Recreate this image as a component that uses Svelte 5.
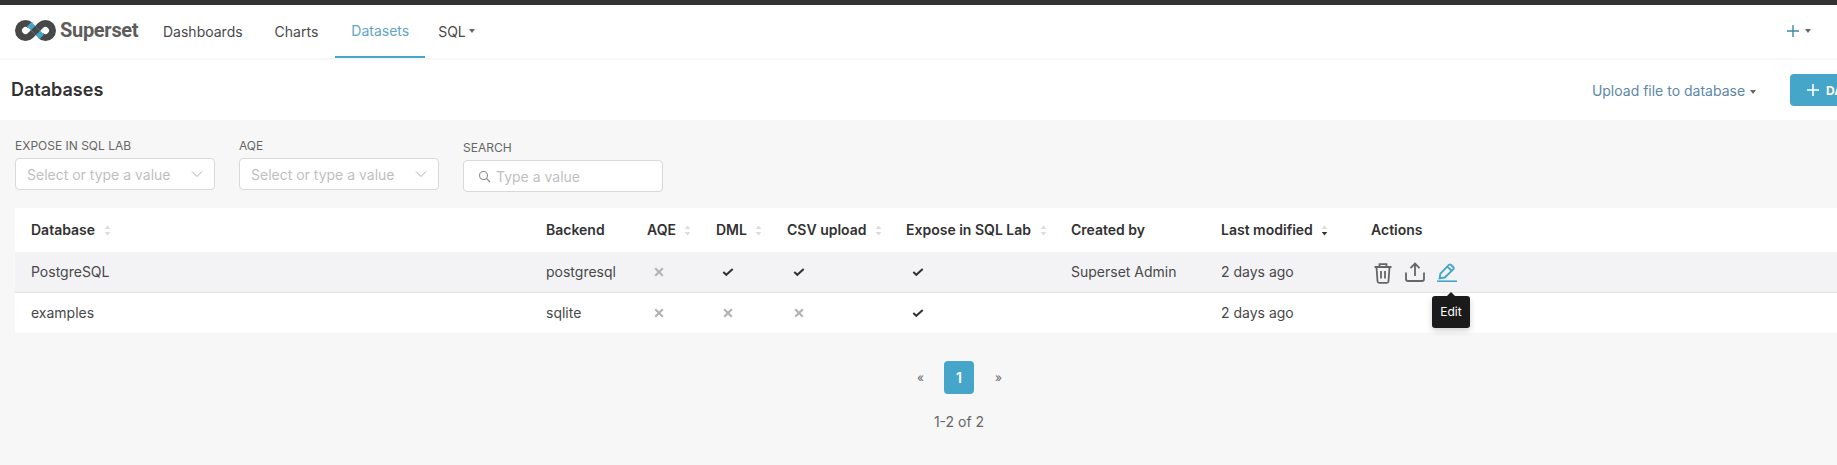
<script>
  const columns = [
    { label: 'Database', sort: true },
    { label: 'Backend' },
    { label: 'AQE', sort: true },
    { label: 'DML', sort: true },
    { label: 'CSV upload', sort: true },
    { label: 'Expose in SQL Lab', sort: true },
    { label: 'Created by' },
    { label: 'Last modified', sort: true, active: true },
    { label: 'Actions' }
  ];
  const rows = [
    { name: 'PostgreSQL', backend: 'postgresql', aqe: false, dml: true, csv: true, expose: true, by: 'Superset Admin', when: '2 days ago', actions: true },
    { name: 'examples', backend: 'sqlite', aqe: false, dml: false, csv: false, expose: true, by: '', when: '2 days ago', actions: false }
  ];
</script>

{#snippet flag(on)}
  {#if on}
    <svg class="flag" width="12" height="12" viewBox="0 0 12 12"><path d="M1.3 6 4.3 8.8 10.7 3" fill="none" stroke="#323232" stroke-width="2"/></svg>
  {:else}
    <svg class="flag" width="12" height="12" viewBox="0 0 12 12"><path d="M2.2 2.2 9.8 9.8M9.8 2.2 2.2 9.8" fill="none" stroke="#b2b2b2" stroke-width="2.1"/></svg>
  {/if}
{/snippet}

{#snippet chevron()}
  <svg class="chev" width="12" height="8" viewBox="0 0 12 8"><path d="M1 1.5 6 6.5 11 1.5" fill="none" stroke="#b2b2b2" stroke-width="1"/></svg>
{/snippet}

<div class="page">
  <header class="nav">
    <div class="brand">
      <svg width="41" height="21" viewBox="0 0 41 21">
        <path d="M15.45 5.55A7 7 0 1 0 15.45 15.45L25.55 5.55A7 7 0 1 1 25.55 15.45" fill="none" stroke="#484848" stroke-width="7"/>
        <path d="M14.2 4.3 26.8 16.7" fill="none" stroke="#45a6c9" stroke-width="6.4"/>
        <path d="M18.4 12.5 22.6 8.5" fill="none" stroke="#484848" stroke-width="7"/>
      </svg>
      <span class="word">Superset</span>
    </div>
    <nav class="menu">
      <a class="item">Dashboards</a>
      <a class="item">Charts</a>
      <a class="item active">Datasets</a>
      <a class="item sql">SQL <i class="caret"></i></a>
    </nav>
    <div class="plus">
      <svg width="14" height="14" viewBox="0 0 14 14"><path d="M7 1V13M1 7H13" stroke="#3f88a8" stroke-width="1.4" fill="none"/></svg>
      <i class="caret"></i>
    </div>
  </header>

  <section class="sub">
    <h1>Databases</h1>
    <div class="sub-actions">
      <span class="upload">Upload file to database <i class="caret"></i></span>
      <button class="primary">
        <svg width="14" height="14" viewBox="0 0 14 14"><path d="M7 1V13M1 7H13" stroke="#fff" stroke-width="1.6" fill="none"/></svg>
        DATABASE
      </button>
    </div>
  </section>

  <section class="filters">
    <div class="filter">
      <span class="label">EXPOSE IN SQL LAB</span>
      <div class="field"><span class="ph">Select or type a value</span>{@render chevron()}</div>
    </div>
    <div class="filter">
      <span class="label">AQE</span>
      <div class="field"><span class="ph">Select or type a value</span>{@render chevron()}</div>
    </div>
    <div class="filter search">
      <span class="label">SEARCH</span>
      <div class="field">
        <svg width="13" height="13" viewBox="0 0 13 13"><circle cx="5.5" cy="5.5" r="4" fill="none" stroke="#8a8a8a" stroke-width="1.1"/><path d="M8.5 8.5 12 12" stroke="#8a8a8a" stroke-width="1.1"/></svg>
        <span class="ph">Type a value</span>
      </div>
    </div>
  </section>

  <table>
    <colgroup>
      <col class="c0" /><col class="c1" /><col class="c2" /><col class="c3" /><col class="c4" /><col class="c5" /><col class="c6" /><col class="c7" /><col />
    </colgroup>
    <thead>
      <tr>
        {#each columns as col}
          <th>
            {col.label}
            {#if col.sort}
              <svg class="sort" width="7" height="11" viewBox="0 0 7 11">
                <path d="M3.5 0.5 6.3 4H.7Z" fill="#dcdcdc"/>
                <path d="M3.5 10.5 6.3 7H.7Z" fill={col.active ? '#323232' : '#dcdcdc'}/>
              </svg>
            {/if}
          </th>
        {/each}
      </tr>
    </thead>
    <tbody>
      {#each rows as row}
        <tr class:hover={row.actions}>
          <td>{row.name}</td>
          <td>{row.backend}</td>
          <td>{@render flag(row.aqe)}</td>
          <td>{@render flag(row.dml)}</td>
          <td>{@render flag(row.csv)}</td>
          <td>{@render flag(row.expose)}</td>
          <td>{row.by}</td>
          <td>{row.when}</td>
          <td class="acts">
            {#if row.actions}
              <div class="icons">
                <svg class="trash" width="20" height="22" viewBox="0 0 20 22" fill="none" stroke="#666" stroke-width="1.8">
                  <path d="M1.5 5H18.5M6.5 5V2.2H13.5V5M3.5 5 4.5 19.2Q4.6 20.8 6.2 20.8H13.8Q15.4 20.8 15.5 19.2L16.5 5M8 9V16.5M12 9V16.5"/>
                </svg>
                <svg width="20" height="20" viewBox="0 0 20 20" fill="none" stroke="#666" stroke-width="1.8">
                  <path d="M10 14V2M5.5 6.2 10 1.6 14.5 6.2M1 10.5V17Q1 19 3 19H17Q19 19 19 17V10.5"/>
                </svg>
                <span class="edit">
                  <svg width="20" height="20" viewBox="0 0 20 20" fill="none" stroke="#45a6c9" stroke-width="1.9">
                    <path d="M3.4 11.6 11.9 2.9Q12.9 1.9 13.9 2.8L16.4 5.2Q17.3 6.1 16.4 7.1L7.8 15.5 2.6 16.4ZM10.3 4.6 14.9 9"/>
                    <path d="M0 19.2H20" stroke-width="1.6"/>
                  </svg>
                  <span class="tip">Edit</span>
                </span>
              </div>
            {/if}
          </td>
        </tr>
      {/each}
    </tbody>
  </table>

  <footer class="pager">
    <div class="pages">
      <span class="arrow">«</span>
      <span class="current">1</span>
      <span class="arrow">»</span>
    </div>
    <div class="count">1-2 of 2</div>
  </footer>
</div>

<style>
  :global(body) {
    margin: 0;
    background: #f7f7f7;
    overflow: hidden;
  }
  .page {
    width: 1837px;
    height: 465px;
    overflow: hidden;
    background: #f7f7f7;
    font-family: Inter, "Liberation Sans", sans-serif;
    font-size: 14px;
    color: #484848;
    border-top: 5px solid #323232;
    box-sizing: border-box;
  }
  .caret {
    display: inline-block;
    width: 0;
    height: 0;
    border-left: 3px solid transparent;
    border-right: 3px solid transparent;
    border-top: 4px solid #666;
    vertical-align: 2px;
    margin-left: 2px;
  }
  .nav {
    height: 53px;
    background: #fff;
    border-bottom: 2px solid #f7f7f7;
    display: flex;
    align-items: stretch;
    padding: 0 26px 0 15px;
  }
  .brand {
    display: flex;
    align-items: center;
    gap: 4px;
    width: 132px;
    padding-bottom: 3px;
    box-sizing: border-box;
  }
  .word {
    font-family: Roboto, sans-serif;
    font-size: 20px;
    font-weight: 700;
    color: #5c5c5c;
    letter-spacing: -0.3px;
  }
  .menu {
    display: flex;
    flex: 1;
  }
  .item {
    padding: 0 16px;
    display: flex;
    align-items: center;
    height: 53px;
    box-sizing: border-box;
    padding-bottom: 1px;
  }
  .active {
    color: #5fa5c9;
    border-bottom: 2px solid #45a6c9;
    padding-bottom: 0;
    margin-left: 1px;
  }
  .sql {
    padding-left: 13px;
  }
  .sql .caret { margin-left: 3px; vertical-align: 0; }
  .plus {
    display: flex;
    align-items: center;
    gap: 5px;
    padding-bottom: 1px;
  }
  .plus .caret { margin: 0; }
  .sub {
    width: 1918px;
    height: 60px;
    background: #fff;
    display: flex;
    align-items: center;
    justify-content: space-between;
    padding: 0 16px 0 11px;
    box-sizing: border-box;
  }
  h1 {
    margin: 0 0 2px;
    font-size: 18px;
    font-weight: 600;
    color: #323232;
  }
  .sub-actions {
    display: flex;
    align-items: center;
    gap: 34px;
  }
  .upload {
    color: #5d88a5;
  }
  .upload .caret { margin-left: 1px; }
  .primary {
    width: 112px;
    height: 32px;
    border: 0;
    border-radius: 4px;
    background: #45a6c9;
    color: #fff;
    font: 700 12px Inter, sans-serif;
    display: flex;
    align-items: center;
    gap: 6px;
    padding: 0 0 0 16px;
  }
  .filters {
    width: 1918px;
    display: flex;
    align-items: flex-start;
    gap: 24px;
    padding: 18px 15px 0;
    height: 88px;
    box-sizing: border-box;
  }
  .filter {
    width: 200px;
    display: flex;
    flex-direction: column;
    gap: 4px;
  }
  .search { margin-top: 2px; }
  .label {
    font-size: 12px;
    line-height: 16px;
    color: #666;
  }
  .field {
    height: 32px;
    border: 1px solid #d9d9d9;
    border-radius: 4px;
    background: #fff;
    display: flex;
    align-items: center;
    justify-content: space-between;
    padding: 0 11px;
    box-sizing: border-box;
    gap: 5px;
  }
  .search .field { justify-content: flex-start; padding-left: 14px; }
  .ph { color: #bfbfbf; }
  table {
    width: 1888px;
    margin: 0 0 0 15px;
    border-collapse: collapse;
    table-layout: fixed;
    background: #fff;
  }
  .c0 { width: 515px; }
  .c1 { width: 101px; }
  .c2 { width: 69px; }
  .c3 { width: 71px; }
  .c4 { width: 119px; }
  .c5 { width: 165px; }
  .c6 { width: 150px; }
  .c7 { width: 150px; }
  th {
    height: 44px;
    padding: 0 0 2px 16px;
    box-sizing: border-box;
    text-align: left;
    font-weight: 600;
    color: #323232;
    white-space: nowrap;
  }
  .sort {
    margin-left: 5px;
    vertical-align: -1px;
  }
  td {
    height: 40px;
    padding: 0 0 0 16px;
    box-sizing: border-box;
    white-space: nowrap;
  }
  tbody tr:last-child td { height: 41px; }
  tbody tr:first-child td { border-bottom: 1px solid #e0e0e0; }
  tr.hover td { background: #f3f3f6; }
  .flag { display: block; margin-left: 6px; }
  .icons {
    display: flex;
    align-items: center;
    gap: 12px;
    margin-left: 2px;
  }
  .trash { position: relative; top: 1px; }
  .edit {
    position: relative;
    display: flex;
    height: 20px;
  }
  .tip {
    position: absolute;
    top: 34px;
    left: -5px;
    width: 38px;
    height: 32px;
    background: #1a1a1a;
    border-radius: 3px;
    color: #fff;
    font-size: 12px;
    display: flex;
    align-items: center;
    justify-content: center;
    box-shadow: 0 3px 6px rgba(0,0,0,.18);
  }
  .tip::before {
    content: "";
    position: absolute;
    top: -4px;
    left: 15px;
    border-left: 4px solid transparent;
    border-right: 4px solid transparent;
    border-bottom: 4px solid #1a1a1a;
  }
  .pager {
    width: 1918px;
    display: flex;
    flex-direction: column;
    align-items: center;
    padding-top: 28px;
  }
  .pages {
    display: flex;
    align-items: center;
    gap: 21px;
  }
  .arrow { color: #666; font-size: 12px; width: 6px; }
  .current {
    width: 30px;
    height: 33px;
    border-radius: 4px;
    background: #45a6c9;
    color: #fff;
    font-weight: 600;
    display: flex;
    align-items: center;
    justify-content: center;
  }
  .count {
    margin-top: 18px;
    color: #666;
    line-height: 20px;
  }
</style>
